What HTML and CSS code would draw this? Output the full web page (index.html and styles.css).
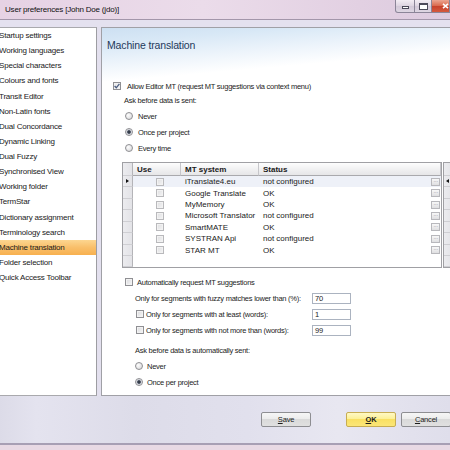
FILE: index.html
```html
<!DOCTYPE html>
<html>
<head>
<meta charset="utf-8">
<title>User preferences</title>
<link rel="stylesheet" href="styles.css">
</head>
<body>
<div class="window">
  <div class="titlebar">
    <span class="title">User preferences [John Doe (jdo)]</span>
    <div class="caption-btns">
      <span class="cap min"><span class="min-glyph"></span></span>
      <span class="cap max"><span class="max-glyph"></span></span>
      <span class="cap close"><svg class="x-glyph" width="7" height="6" viewBox="0 0 7 6"><path d="M1 0.8 L6 5.2 M6 0.8 L1 5.2" stroke="#fff" stroke-width="1.6"/></svg></span>
    </div>
  </div>
  <div class="band"></div>
  <div class="main">
    <ul class="nav">
      <li>Startup settings</li>
      <li>Working languages</li>
      <li>Special characters</li>
      <li>Colours and fonts</li>
      <li>Transit Editor</li>
      <li>Non-Latin fonts</li>
      <li>Dual Concordance</li>
      <li>Dynamic Linking</li>
      <li>Dual Fuzzy</li>
      <li>Synchronised View</li>
      <li>Working folder</li>
      <li>TermStar</li>
      <li>Dictionary assignment</li>
      <li>Terminology search</li>
      <li class="sel">Machine translation</li>
      <li>Folder selection</li>
      <li>Quick Access Toolbar</li>
    </ul>
    <div class="page">
      <div class="page-head">Machine translation</div>

      <div class="row allow"><span class="cb on"><svg width="6" height="6" viewBox="0 0 6 6"><path d="M0.6 3 L2.3 4.8 L5.4 0.8" fill="none" stroke="#4b5d80" stroke-width="1.3"/></svg></span><span>Allow Editor MT (request MT suggestions via context menu)</span></div>
      <div class="lbl ask">Ask before data is sent:</div>
      <div class="row radio"><span class="rb"></span><span>Never</span></div>
      <div class="row radio"><span class="rb on"></span><span>Once per project</span></div>
      <div class="row radio"><span class="rb"></span><span>Every time</span></div>

      <div class="mtgrid">
        <div class="mtable">
          <div class="rh"></div><div class="hd">Use</div><div class="hd">MT system</div><div class="hd">Status</div>

          <div class="rh"><span class="arrow-r"></span></div><div class="c use cur"><span class="cb dis"></span></div><div class="c cur">iTranslate4.eu</div><div class="c st cur">not configured<span class="ell">···</span></div>
          <div class="rh"></div><div class="c use"><span class="cb dis"></span></div><div class="c">Google Translate</div><div class="c st">OK<span class="ell">···</span></div>
          <div class="rh"></div><div class="c use"><span class="cb dis"></span></div><div class="c">MyMemory</div><div class="c st">OK<span class="ell">···</span></div>
          <div class="rh"></div><div class="c use"><span class="cb dis"></span></div><div class="c">Microsoft Translator</div><div class="c st">not configured<span class="ell">···</span></div>
          <div class="rh"></div><div class="c use"><span class="cb dis"></span></div><div class="c">SmartMATE</div><div class="c st">OK<span class="ell">···</span></div>
          <div class="rh"></div><div class="c use"><span class="cb dis"></span></div><div class="c">SYSTRAN Api</div><div class="c st">not configured<span class="ell">···</span></div>
          <div class="rh"></div><div class="c use"><span class="cb dis"></span></div><div class="c">STAR MT</div><div class="c st">OK<span class="ell">···</span></div>

          <div class="rh"></div><div class="c empty"></div>
        </div>
        <div class="side">
          <div class="sh"></div>
          <div class="sh"><span class="arrow-l"></span></div>
          <div class="sh"></div>
          <div class="sh"></div>
          <div class="sh"></div>
          <div class="sh"></div>
          <div class="sh"></div>
          <div class="sh"></div>
          <div class="sh"></div>
        </div>
      </div>

      <div class="row auto"><span class="cb"></span><span>Automatically request MT suggestions</span></div>
      <div class="opts">
        <div class="opt-label"><span>Only for segments with fuzzy matches lower than (%):</span></div>
        <div class="tb">70</div>
        <div class="opt-label"><span class="cb"></span><span>Only for segments with at least (words):</span></div>
        <div class="tb">1</div>
        <div class="opt-label"><span class="cb"></span><span>Only for segments with not more than (words):</span></div>
        <div class="tb">99</div>
      </div>
      <div class="lbl ask2">Ask before data is automatically sent:</div>
      <div class="row radio2"><span class="rb"></span><span>Never</span></div>
      <div class="row radio2"><span class="rb on"></span><span>Once per project</span></div>
    </div>
  </div>
  <div class="footer">
    <span class="btn save"><span class="u">S</span>ave</span>
    <span class="btn ok"><span class="u">O</span>K</span>
    <span class="btn cancel"><span class="u">C</span>ancel</span>
  </div>
  <div class="bottom-edge"></div>
</div>
</body>
</html>
```
FILE: styles.css
```css
* { box-sizing: border-box; }
html, body { margin: 0; padding: 0; }
body {
  width: 450px;
  height: 450px;
  overflow: hidden;
  font-family: "Liberation Sans", Arial, sans-serif;
  color: #1a1a1a;
  background: #e2e0ee;
}
.window {
  width: 450px;
  height: 450px;
  display: flex;
  flex-direction: column;
  overflow: hidden;
  background: #e3e0ee;
}

/* title bar */
.titlebar {
  height: 20px;
  flex: none;
  display: flex;
  align-items: flex-start;
  background: linear-gradient(to right, #e6d2e4, #ebdcea 45%, #e2d0e2 80%, #dccbdf);
  border-bottom: 1px solid #a396aa;
}
.title {
  font-size: 8px;
  letter-spacing: -0.2px;
  line-height: 19px;
  padding-left: 5px;
  color: #111;
  white-space: nowrap;
}
.caption-btns {
  margin-left: auto;
  display: flex;
  height: 13px;
}
.cap {
  display: flex;
  height: 13px;
  border: 1px solid #8b8598;
  border-top: none;
}
.cap.min {
  width: 20px;
  border-bottom-left-radius: 3px;
  background: linear-gradient(#f3edf4, #ddd4e1 50%, #d2c8d8 50%, #ddd6e2);
  align-items: flex-end;
  justify-content: center;
  padding-bottom: 3px;
}
.min-glyph {
  width: 7px;
  height: 3px;
  border: 1px solid #4c4a5a;
  background: #fff;
}
.cap.max {
  width: 17px;
  border-left: none;
  background: linear-gradient(#f3edf4, #ddd4e1 50%, #d2c8d8 50%, #ddd6e2);
  align-items: center;
  justify-content: center;
}
.max-glyph {
  width: 9px;
  height: 7px;
  border: 1px solid #4c4a5a;
  border-top-width: 2px;
  background: #fff;
}
.cap.close {
  width: 18px;
  border-left: none;
  background: linear-gradient(#eba591, #d9674b 50%, #c7402a 50%, #d45a3e);
  align-items: center;
  padding-left: 10px;
}

.band { height: 7px; flex: none; background: #e4e1ef; }

/* main area */
.main {
  height: 369px;
  flex: none;
  display: flex;
  background: #e3e0ee;
}
.nav {
  width: 97px;
  height: 369px;
  flex: none;
  margin: 0;
  padding: 0;
  list-style: none;
  background: #fff;
  border-top: 1px solid #a9a9ad;
  border-bottom: 1px solid #a9a9ad;
  border-right: 1px solid #9d9da2;
}
.nav li {
  height: 15.125px;
  line-height: 15.125px;
  font-size: 8px;
  letter-spacing: -0.2px;
  white-space: nowrap;
  text-indent: -1px;
  color: #1a1a1a;
}
.nav li.sel {
  background: linear-gradient(#fdd690, #f9bf6a 50%, #f7b04f);
}

.page {
  width: 349px;
  height: 369px;
  flex: none;
  margin-left: 4px;
  border: 1px solid #a0a0a6;
  border-right: none;
  background: #fff linear-gradient(175deg, #cde0f2 0px, #d8e8f6 16px, #edf4fb 36px, #fff 54px) no-repeat;
  background-size: 100% 90px;
  overflow: hidden;
  font-size: 7.5px;
  letter-spacing: -0.25px;
  color: #1c1c1c;
}
.page-head {
  height: 34px;
  display: flex;
  align-items: center;
  padding-left: 5px;
  font-size: 10.5px;
  letter-spacing: -0.15px;
  color: #1e395b;
}

.row {
  display: flex;
  align-items: center;
  height: 16px;
  white-space: nowrap;
}
.lbl { white-space: nowrap; height: 14px; line-height: 14px; }

.allow { margin-top: 16px; padding-left: 11px; }
.allow .cb { margin-right: 6px; }
.ask { padding-left: 22px; }
.radio { padding-left: 23px; }
.radio .rb { margin-right: 5px; }

.auto { margin-top: 6px; padding-left: 23px; }
.auto .cb { margin-right: 4px; }

.opts {
  display: grid;
  grid-template-columns: 177px 39px;
  grid-auto-rows: 16px;
  align-items: center;
  margin-left: 33px;
}
.opt-label { display: flex; align-items: center; white-space: nowrap; }
.opt-label .cb { margin-left: 1px; margin-right: 2px; }
.tb {
  width: 39px;
  height: 11px;
  border: 1px solid #abb3c0;
  background: #fff;
  padding-left: 2px;
  line-height: 9px;
  font-size: 7.5px;
}
.ask2 { margin-top: 6px; padding-left: 33px; }
.radio2 { padding-left: 33px; }
.radio2 .rb { margin-right: 4px; }

/* check boxes and radio buttons */
.cb {
  width: 8px;
  height: 8px;
  flex: none;
  display: inline-flex;
  align-items: center;
  justify-content: center;
  border: 1px solid #8f8f93;
  background: linear-gradient(135deg, #d9d9dc, #f6f6f7);
  box-shadow: inset 0 0 0 1px #f2f2f2;
}
.cb.on { background: linear-gradient(135deg, #e4e4e6, #fbfbfb); }
.cb.dis {
  border-color: #b9b9bc;
  background: linear-gradient(135deg, #dedee0, #f4f4f5);
}
.rb {
  width: 8px;
  height: 8px;
  flex: none;
  border-radius: 50%;
  border: 1px solid #8f8f93;
  background: radial-gradient(circle at 35% 35%, #fdfdfd, #d3d3d6);
}
.rb.on {
  background: radial-gradient(circle, #2e3440 0, #3b4352 1.4px, #c8ccd4 2.2px, #f3f3f4 3.2px);
}

/* MT grid */
.mtgrid {
  display: flex;
  margin-top: 6px;
  margin-left: 20px;
  height: 106px;
  font-size: 8px;
  letter-spacing: 0;
}
.mtable {
  width: 320px;
  height: 106px;
  flex: none;
  border: 1px solid #a0a0a4;
  display: grid;
  grid-template-columns: 10px 48px 78px 1fr;
  grid-template-rows: 13px repeat(7, 11.43px) 1fr;
  background: #fff;
}
.rh {
  background: linear-gradient(to right, #ececef, #e3e3e7);
  border-right: 1px solid #b4b4b8;
  border-bottom: 1px solid #cfcfd3;
  display: flex;
  align-items: center;
  justify-content: center;
}
.hd {
  background: linear-gradient(#fdfdfd, #f1f1f2 50%, #e6e6e8);
  border-right: 1px solid #c6c6ca;
  border-bottom: 1px solid #a9a9ad;
  font-weight: bold;
  padding-left: 4px;
  display: flex;
  align-items: center;
  white-space: nowrap;
  color: #1a1a1a;
}
.c {
  display: flex;
  align-items: center;
  padding-left: 4px;
  white-space: nowrap;
  overflow: hidden;
  color: #222;
}
.c.cur { background: #eef1f8; }
.c.use { justify-content: center; padding-left: 6px; }
.c.empty { grid-column: 2 / 5; }
.st { padding-right: 1px; }
.ell {
  margin-left: auto;
  width: 9px;
  height: 8px;
  border: 1px solid #b8b8bc;
  background: linear-gradient(#f8f8f8, #dfdfe1);
  font-size: 6px;
  line-height: 5px;
  color: #8a8a90;
  text-align: center;
  letter-spacing: -0.5px;
}
.arrow-r {
  width: 0;
  height: 0;
  border-left: 3px solid #111;
  border-top: 2.5px solid transparent;
  border-bottom: 2.5px solid transparent;
}
.side {
  width: 10px;
  height: 106px;
  flex: none;
  margin-left: 1px;
  border-top: 1px solid #a0a0a4;
  border-bottom: 1px solid #a0a0a4;
  border-left: 1px solid #a0a0a4;
  display: grid;
  grid-template-rows: 13px repeat(7, 11.43px) 1fr;
}
.sh {
  background: linear-gradient(to right, #ececef, #e3e3e7);
  border-bottom: 1px solid #cfcfd3;
  display: flex;
  align-items: center;
  padding-left: 2px;
}
.arrow-l {
  width: 0;
  height: 0;
  border-right: 3px solid #111;
  border-top: 2.5px solid transparent;
  border-bottom: 2.5px solid transparent;
}

/* footer */
.footer {
  height: 47px;
  flex: none;
  display: flex;
  align-items: flex-start;
  padding-top: 16px;
  padding-left: 261px;
  background: linear-gradient(to right, #dcdbe8, #e4e3ef 8%, #dddce9 30%, #e1e0ed 55%, #e8e7f1 75%, #dfdeeb);
}
.btn {
  flex: none;
  width: 50px;
  height: 15px;
  border: 1px solid #8e8e92;
  border-radius: 2px;
  background: linear-gradient(#f6f6f6, #ebebeb 50%, #dadada 50%, #e0e0e0);
  font-size: 7.5px;
  letter-spacing: -0.2px;
  display: flex;
  align-items: center;
  justify-content: center;
  color: #1c1c1c;
}
.btn.save { margin-right: 35px; }
.btn.ok {
  margin-right: 5px;
  background: linear-gradient(#fff9c4, #fcef91 50%, #f9e062 50%, #fbe678);
  border-color: #c7ad52;
  font-weight: bold;
}
.u { text-decoration: underline; }

.bottom-edge {
  height: 7px;
  flex: none;
  border-top: 2px solid #a79fb4;
  background: #e8d9e4;
}
```
